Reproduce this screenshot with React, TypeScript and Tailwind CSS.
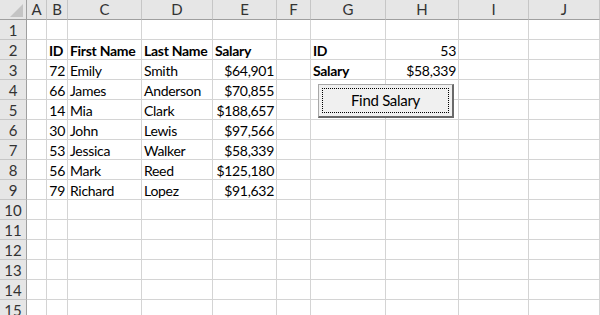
// Feuille de calcul façon Excel avec bouton "Find Salary"

const cols = ['', 'A', 'B', 'C', 'D', 'E', 'F', 'G', 'H', 'I', 'J'];

type Cell = { v: string; bold?: boolean; right?: boolean };
type Row = Record<string, Cell>;

const data: Record<number, Row> = {
  2: {
    B: { v: 'ID', bold: true },
    C: { v: 'First Name', bold: true },
    D: { v: 'Last Name', bold: true },
    E: { v: 'Salary', bold: true },
    G: { v: 'ID', bold: true },
    H: { v: '53', right: true },
  },
  3: {
    B: { v: '72', right: true },
    C: { v: 'Emily' },
    D: { v: 'Smith' },
    E: { v: '$64,901', right: true },
    G: { v: 'Salary', bold: true },
    H: { v: '$58,339', right: true },
  },
  4: { B: { v: '66', right: true }, C: { v: 'James' }, D: { v: 'Anderson' }, E: { v: '$70,855', right: true } },
  5: { B: { v: '14', right: true }, C: { v: 'Mia' }, D: { v: 'Clark' }, E: { v: '$188,657', right: true } },
  6: { B: { v: '30', right: true }, C: { v: 'John' }, D: { v: 'Lewis' }, E: { v: '$97,566', right: true } },
  7: { B: { v: '53', right: true }, C: { v: 'Jessica' }, D: { v: 'Walker' }, E: { v: '$58,339', right: true } },
  8: { B: { v: '56', right: true }, C: { v: 'Mark' }, D: { v: 'Reed' }, E: { v: '$125,180', right: true } },
  9: { B: { v: '79', right: true }, C: { v: 'Richard' }, D: { v: 'Lopez' }, E: { v: '$91,632', right: true } },
};

const rows = Array.from({ length: 15 }, (_, i) => i + 1);

export default function App() {
  return (
    <div
      className="relative w-[600px] h-[315px] overflow-hidden bg-white text-[14px] tracking-[-0.3px] text-black"
      style={{ fontFamily: 'Lato, "Open Sans", sans-serif' }}
    >
      <div className="grid grid-cols-[27px_20px_21px_74px_71px_64px_34px_75px_73px_70px_71px] auto-rows-[20px]">
        {/* En-têtes de colonnes */}
        {cols.map((c, i) =>
          i === 0 ? (
            <div key="corner" className="relative h-[20px] bg-[#e6e6e6] border-r border-b border-[#9f9f9f]">
              <svg className="absolute right-[3px] bottom-[2px]" width="13" height="13" viewBox="0 0 13 13">
                <polygon points="13,0 13,13 0,13" fill="#c4c4c4" />
              </svg>
            </div>
          ) : (
            <div
              key={c}
              className="flex items-center justify-center h-[20px] bg-[#e6e6e6] border-r border-r-[#c6c6c6] border-b border-b-[#9f9f9f] text-[15px] tracking-normal text-[#333]"
            >
              {c}
            </div>
          )
        )}
        {rows.map((r) => (
          <Line key={r} r={r} />
        ))}
      </div>

      {/* Bouton de formulaire */}
      <button className="absolute left-[318px] top-[84px] w-[136px] h-[34px] bg-[#f0f0f0] border-t border-l border-[#a8a8a8] border-r-2 border-b-2 border-r-[#696969] border-b-[#696969] p-[3px]">
        <div className="flex items-center justify-center w-full h-full border border-dotted border-black text-[15px] text-black">
          Find Salary
        </div>
      </button>
    </div>
  );
}

function Line({ r }: { r: number }) {
  const row = data[r] || {};
  return (
    <>
      <div className="flex items-center justify-center pt-[1px] bg-[#e6e6e6] border-r border-r-[#9f9f9f] border-b border-b-[#c6c6c6] text-[15px] tracking-normal text-[#333]">
        {r}
      </div>
      {cols.slice(1).map((c) => {
        const cell = row[c];
        return (
          <div
            key={c}
            className={`flex items-center whitespace-nowrap overflow-visible pt-[1px] border-r border-b border-[#d4d4d4] px-[2px] ${
              cell?.right ? 'justify-end' : 'justify-start'
            } ${cell?.bold ? 'font-bold' : ''}`}
          >
            {cell?.v}
          </div>
        );
      })}
    </>
  );
}
